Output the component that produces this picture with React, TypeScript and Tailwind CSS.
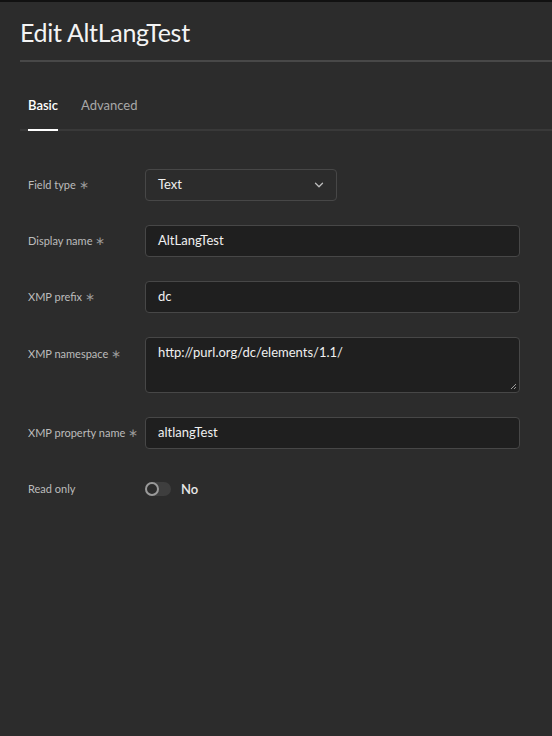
import { ChevronDown } from "lucide-react";

const font = { fontFamily: "Lato, 'Open Sans', sans-serif" };

function Label({ text, required = true }: { text: string; required?: boolean }) {
  return (
    <div className="w-[117px] shrink-0 text-[11px] text-[#bcbcbc]">
      {text}
      {required && <span className="ml-[3px] text-[12px] text-[#9a9a9a]">∗</span>}
    </div>
  );
}

function TextField({ value }: { value: string }) {
  return (
    <div className="flex h-[32px] flex-1 items-center rounded-[4px] border border-[#474747] bg-[#1f1f1f] px-[12px] text-[13px] text-[#f0f0f0]">
      {value}
    </div>
  );
}

export default function App() {
  return (
    <div
      className="min-h-[736px] w-[552px] border-t-2 border-[#111111] bg-[#2c2c2c]"
      style={font}
    >
      <div className="pl-[20px]">
        <h1 className="pt-[14px] text-[25px] leading-[32px] tracking-[-0.3px] text-[#f4f4f4]">
          Edit AltLangTest
        </h1>
        <div className="mt-[12px] h-[2px] bg-[#484848]" />

        {/* tabs */}
        <div className="mt-[34px] flex border-b-2 border-[#393939] pl-[8px]">
          <div className="-mb-[2px] border-b-2 border-white pb-[13px] text-[13px] font-semibold text-white">
            Basic
          </div>
          <div className="ml-[23px] pb-[13px] text-[13px] text-[#a8a8a8]">Advanced</div>
        </div>
      </div>

      <div className="flex flex-col pl-[28px] pr-[32px] pt-[38px]">
        <div className="flex items-center">
          <Label text="Field type" />
          <div className="flex h-[32px] w-[192px] items-center justify-between rounded-[4px] border border-[#474747] bg-[#2c2c2c] pl-[12px] pr-[10px] text-[13px] text-[#f0f0f0]">
            Text
            <ChevronDown size={14} strokeWidth={2.2} className="text-[#bdbdbd]" />
          </div>
        </div>

        <div className="mt-[24px] flex items-center">
          <Label text="Display name" />
          <TextField value="AltLangTest" />
        </div>

        <div className="mt-[24px] flex items-center">
          <Label text="XMP prefix" />
          <TextField value="dc" />
        </div>

        <div className="mt-[24px] flex items-start">
          <div className="pt-[8px]">
            <Label text="XMP namespace" />
          </div>
          <div className="relative h-[56px] flex-1 rounded-[4px] border border-[#474747] bg-[#1f1f1f] px-[12px] pt-[5px] text-[13px] text-[#f0f0f0]">
            http://purl.org/dc/elements/1.1/
            <svg
              className="absolute bottom-[2px] right-[2px]"
              width="7"
              height="7"
              viewBox="0 0 7 7"
            >
              <path d="M1 6L6 1M4 6L6 4" stroke="#9a9a9a" strokeWidth="1" />
            </svg>
          </div>
        </div>

        <div className="mt-[24px] flex items-center">
          <Label text="XMP property name" />
          <TextField value="altlangTest" />
        </div>

        <div className="mt-[31px] flex items-center">
          <Label text="Read only" required={false} />
          <div className="flex items-center">
            <div className="flex h-[14px] w-[26px] items-center rounded-full bg-[#3e3e3e]">
              <div className="h-[14px] w-[14px] rounded-full border-2 border-[#9a9a9a] bg-[#2c2c2c]" />
            </div>
            <span className="ml-[10px] text-[13px] font-semibold text-[#e8e8e8]">No</span>
          </div>
        </div>
      </div>
    </div>
  );
}
